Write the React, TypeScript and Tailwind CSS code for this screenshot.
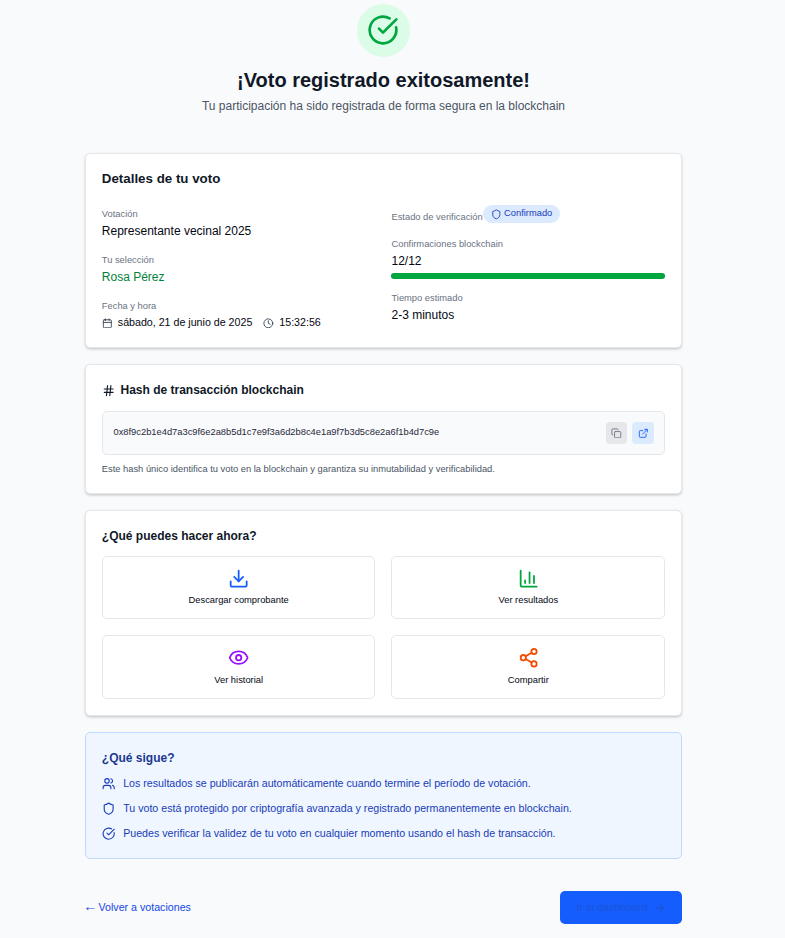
import type { ReactNode } from 'react';
import {
  ArrowRight,
  Calendar,
  ChartColumn,
  CircleCheckBig,
  Clock,
  Copy,
  Download,
  ExternalLink,
  Eye,
  Hash,
  Share2,
  Shield,
  Users,
} from 'lucide-react';

const card =
  'w-[597.33px] rounded-[5px] border border-gray-200 bg-white px-4 shadow-[0_1px_3px_0_rgba(0,0,0,0.12),0_2px_3px_-1px_rgba(0,0,0,0.12)]';

function Label({ children }: { children: ReactNode }) {
  return <p className="text-[9.33px] leading-[14px] text-gray-500">{children}</p>;
}

function Value({ children, className }: { children: ReactNode; className: string }) {
  return <p className={`mt-px text-[12px] leading-[18px] ${className}`}>{children}</p>;
}

function Action({ icon, label }: { icon: ReactNode; label: string }) {
  return (
    <button className="flex flex-col items-center rounded-[5px] border border-gray-200 pt-[10.67px] text-[9.33px] text-gray-950">
      {icon}
      <span className="mt-[4.5px] leading-[14px]">{label}</span>
    </button>
  );
}

function NextStep({ icon, children }: { icon: ReactNode; children: ReactNode }) {
  return (
    <li className="flex h-[25px] items-center gap-2">
      {icon}
      <span className="-mt-[2px] text-[10.67px] leading-4">{children}</span>
    </li>
  );
}

export default function App() {
  return (
    <div className="flex h-[938px] w-[785px] flex-col items-center overflow-hidden bg-gray-50 pr-[18px] font-['Liberation_Sans',Arial,sans-serif] text-gray-900">
      <header className="flex h-[153px] flex-col items-center pt-1">
        <div className="flex size-[53px] items-center justify-center rounded-full bg-green-100 pb-[2px] pr-[2px]">
          <CircleCheckBig className="size-8 text-green-600" />
        </div>
        <h1 className="mt-[10px] text-[20px] font-bold leading-[27px]">¡Voto registrado exitosamente!</h1>
        <p className="mt-[3px] text-[12px] leading-[18px] text-gray-600">
          Tu participación ha sido registrada de forma segura en la blockchain
        </p>
      </header>

      <main className="flex flex-col gap-4">
        <section className={`${card} h-[195px] pt-4`}>
          <h2 className="text-[13.33px] font-bold leading-[18px]">Detalles de tu voto</h2>
          <div className="mt-[17px] grid grid-cols-2 gap-4">
            <div className="flex flex-col gap-[13px] pt-[2px]">
              <div>
                <Label>Votación</Label>
                <Value className="text-gray-950">Representante vecinal 2025</Value>
              </div>
              <div>
                <Label>Tu selección</Label>
                <Value className="text-green-700">Rosa Pérez</Value>
              </div>
              <div>
                <Label>Fecha y hora</Label>
                <div className="flex h-[18px] items-center text-[10.67px] text-gray-950">
                  <Calendar className="mt-[2px] size-[10.67px] text-gray-700" />
                  <span className="ml-[5.33px]">sábado, 21 de junio de 2025</span>
                  <Clock className="ml-[10.67px] mt-[2px] size-[10.67px] text-gray-700" />
                  <span className="ml-[5.67px]">15:32:56</span>
                </div>
              </div>
            </div>
            <div className="flex flex-col">
              <div className="flex h-[18px]">
                <span className="pt-[5px] text-[9.33px] leading-[14px] text-gray-500">Estado de verificación</span>
                <span className="ml-[0.5px] flex h-[18px] w-[76.5px] items-center justify-center gap-[2.67px] rounded-full bg-blue-100 text-[9.33px] text-blue-800">
                  <Shield className="mt-[1px] size-[10.67px]" />
                  <span className="-mt-[3px] leading-[14px]">Confirmado</span>
                </span>
              </div>
              <div className="mt-[14px]">
                <Label>Confirmaciones blockchain</Label>
                <Value className="text-gray-950">12/12</Value>
                <div className="mt-[3px] h-[6px] rounded-full bg-gray-200">
                  <div className="h-full w-full rounded-full bg-green-600" />
                </div>
              </div>
              <div className="mt-[12px]">
                <Label>Tiempo estimado</Label>
                <Value className="text-gray-950">2-3 minutos</Value>
              </div>
            </div>
          </div>
        </section>

        <section className={`${card} h-[130px] pt-4`}>
          <h2 className="flex h-[18px] items-center gap-[5.33px] text-[12px] font-bold">
            <Hash className="mt-px size-[13.33px]" />
            Hash de transacción blockchain
          </h2>
          <div className="mt-[12px] flex h-[44px] items-center gap-[5px] rounded-[5px] border border-gray-200 bg-gray-50 px-[10.67px]">
            <code className="-mt-[2px] flex-1 font-['Liberation_Sans',Arial,sans-serif] text-[9.33px] leading-[14px] text-gray-800">
              0x8f9c2b1e4d7a3c9f6e2a8b5d1c7e9f3a6d2b8c4e1a9f7b3d5c8e2a6f1b4d7c9e
            </code>
            <button className="flex size-[21.33px] items-center justify-center rounded-[4px] bg-gray-200 text-gray-500">
              <Copy className="size-[10.67px]" />
            </button>
            <button className="flex size-[21.33px] items-center justify-center rounded-[4px] bg-blue-100 text-blue-600">
              <ExternalLink className="size-[10.67px]" />
            </button>
          </div>
          <p className="mt-[7px] text-[9.33px] leading-[14px] text-gray-600">
            Este hash único identifica tu voto en la blockchain y garantiza su inmutabilidad y verificabilidad.
          </p>
        </section>

        <section className={`${card} h-[206px] pt-4`}>
          <h2 className="text-[12px] font-bold leading-[18px]">¿Qué puedes hacer ahora?</h2>
          <div className="mt-[11px] grid auto-rows-[63.33px] grid-cols-2 gap-4">
            <Action icon={<Download className="size-[21.33px] text-blue-600" />} label="Descargar comprobante" />
            <Action icon={<ChartColumn className="size-[21.33px] text-green-600" />} label="Ver resultados" />
            <Action icon={<Eye className="size-[21.33px] text-purple-600" />} label="Ver historial" />
            <Action icon={<Share2 className="size-[21.33px] text-orange-600" />} label="Compartir" />
          </div>
        </section>

        <section className="h-[127px] w-[597.33px] rounded-[5px] border border-blue-200 bg-blue-50 px-4 pt-4 text-blue-800">
          <h2 className="text-[12px] font-bold leading-[18px] text-blue-900">¿Qué sigue?</h2>
          <ul className="mt-[4px]">
            <NextStep icon={<Users className="size-[13.33px]" />}>
              Los resultados se publicarán automáticamente cuando termine el período de votación.
            </NextStep>
            <NextStep icon={<Shield className="size-[13.33px]" />}>
              Tu voto está protegido por criptografía avanzada y registrado permanentemente en blockchain.
            </NextStep>
            <NextStep icon={<CircleCheckBig className="size-[13.33px]" />}>
              Puedes verificar la validez de tu voto en cualquier momento usando el hash de transacción.
            </NextStep>
          </ul>
        </section>

        <footer className="mt-4 flex h-[33px] w-[597.33px] items-center justify-between text-[10.67px]">
          <a className="flex h-4 -mt-[2px] items-center leading-4 text-blue-700">
            <span className="-ml-[1.5px] -mt-[1px] w-[15.2px] text-[14px]">←</span>
            Volver a votaciones
          </a>
          <a className="flex h-[33px] w-[122px] items-center justify-center gap-[5.33px] rounded-[5px] bg-[#155dfc] text-[#1b54d8]">
            <span className="-mt-[1px]">Ir al dashboard</span>
            <ArrowRight className="size-[13.33px]" />
          </a>
        </footer>
      </main>
    </div>
  );
}
